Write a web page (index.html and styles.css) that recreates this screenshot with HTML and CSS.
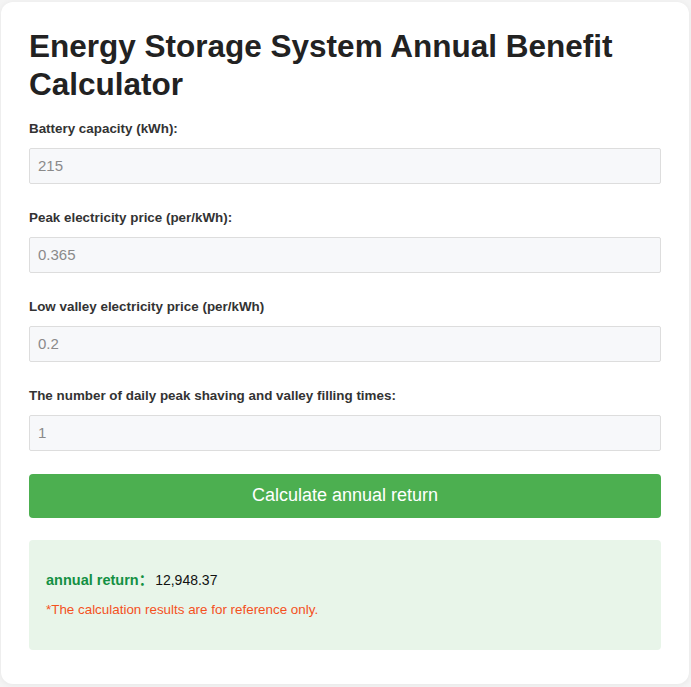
FILE: index.html
```html
<!DOCTYPE html>
<html lang="en">
  <head>
    <meta charset="UTF-8" />
    <meta name="viewport" content="width=device-width, initial-scale=1.0" />
    <title>Energy Storage System Annual Benefit Calculator</title>
    <link rel="stylesheet" href="styles.css">
  </head>
  <body>
    <main class="calculator">
      <h1>Energy Storage System Annual Benefit Calculator</h1>
      <div class="fields">
        <div class="field">
          <label for="capacity">Battery capacity (kWh):</label>
          <input id="capacity" type="number" placeholder="215" />
        </div>
        <div class="field">
          <label for="peak-price">Peak electricity price (per/kWh):</label>
          <input id="peak-price" type="number" placeholder="0.365" />
        </div>
        <div class="field">
          <label for="valley-price">Low valley electricity price (per/kWh)</label>
          <input id="valley-price" type="number" placeholder="0.2" />
        </div>
        <div class="field">
          <label for="cycles">The number of daily peak shaving and valley filling times:</label>
          <input id="cycles" type="number" placeholder="1" />
        </div>
      </div>
      <button class="calc-btn" type="button">Calculate annual return</button>
      <div class="result">
        <p class="result-line"><span class="result-label">annual return：</span><span class="result-value">12,948.37</span></p>
        <p class="result-note">*The calculation results are for reference only.</p>
      </div>
    </main>
  </body>
</html>
```

FILE: styles.css
```css
body {
  font-family: "Liberation Sans", Arial, "Noto Sans CJK SC", sans-serif;
  background-color: #f4f4f4;
  margin: 0;
  padding: 2px 2px 4px 1px;
}

.calculator {
  background-color: #fff;
  border-radius: 12px;
  box-shadow: 0 1px 6px rgba(0, 0, 0, 0.06);
  padding: 25px 28px 34px;
}

h1 {
  margin: 0 0 17.5px;
  font-size: 31.5px;
  line-height: 38px;
  font-weight: bold;
  color: #222;
}

.fields {
  display: flex;
  flex-direction: column;
  gap: 26px;
}

.field label {
  display: block;
  font-size: 13.4px;
  line-height: 16px;
  font-weight: bold;
  color: #333;
  margin-bottom: 11px;
}

.field input {
  display: block;
  box-sizing: border-box;
  width: 100%;
  height: 36px;
  margin: 0;
  padding: 0 8px;
  border: 1px solid #ddd;
  border-radius: 2px;
  background-color: #f7f8fa;
  font-family: inherit;
  font-size: 15px;
  color: #333;
}

.field input::placeholder {
  color: #8a8a8a;
}

.calc-btn {
  display: block;
  width: 100%;
  height: 44px;
  margin-top: 23px;
  border: none;
  border-radius: 4px;
  background-color: #4caf50;
  color: #fff;
  font-family: inherit;
  font-size: 18px;
  cursor: pointer;
}

.result {
  margin-top: 22px;
  padding: 18px 17px 18px;
  border-radius: 4px;
  background-color: #e8f5e9;
}

.result p {
  margin: 14px 0;
  line-height: 16px;
}

.result-line {
  font-size: 14px;
}

.result-label {
  font-size: 14.5px;
  font-weight: bold;
  color: #139043;
}

.result-value {
  margin-left: 2px;
  color: #111;
}

.result-note {
  font-size: 13.4px;
  color: #f4511e;
}
```
